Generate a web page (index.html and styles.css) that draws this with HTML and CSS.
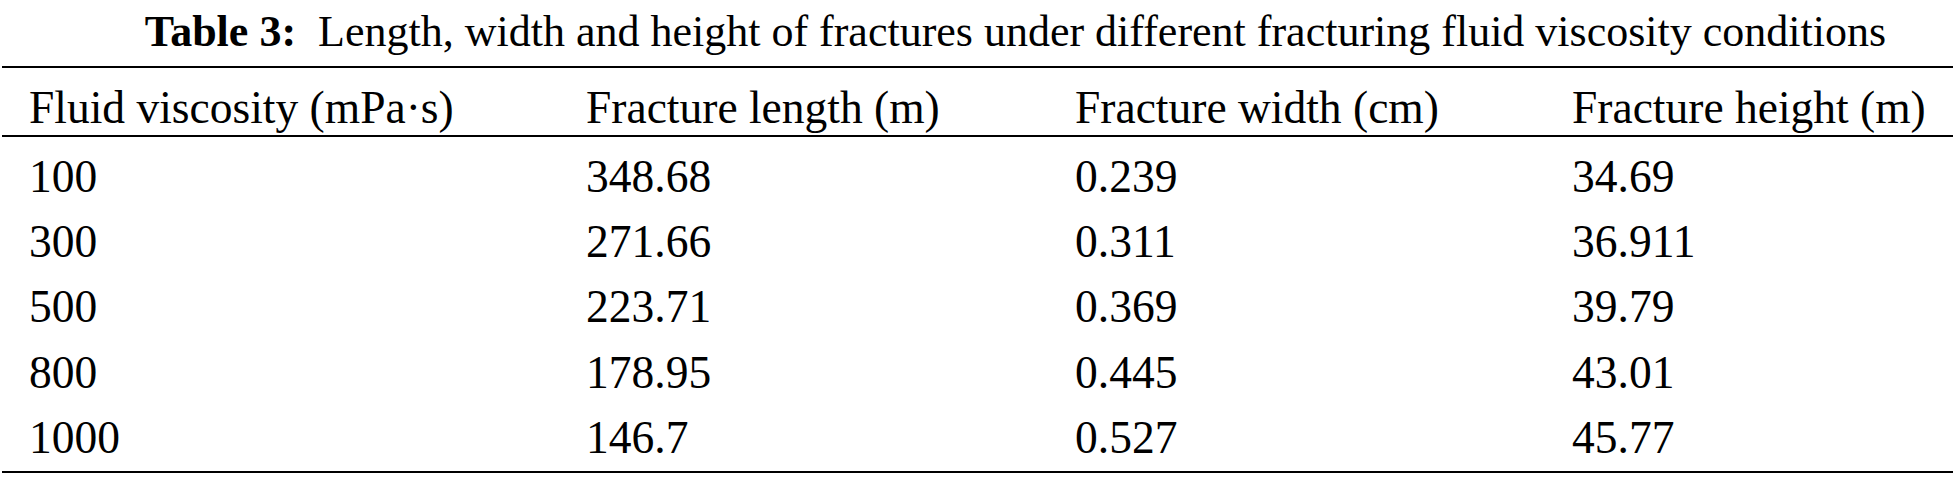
FILE: index.html
```html
<!DOCTYPE html>
<html lang="en">
<head>
<meta charset="utf-8">
<title>Table 3</title>
<link rel="stylesheet" href="styles.css">
</head>
<body>
<div class="page">
  <div class="caption"><span class="label">Table 3:</span>&nbsp; Length, width and height of fractures under different fracturing fluid viscosity conditions</div>
  <div class="table">
    <div class="row head">
      <div class="cell">Fluid viscosity (mPa·s)</div>
      <div class="cell">Fracture length (m)</div>
      <div class="cell">Fracture width (cm)</div>
      <div class="cell">Fracture height (m)</div>
    </div>
    <div class="row">
      <div class="cell">100</div><div class="cell">348.68</div><div class="cell">0.239</div><div class="cell">34.69</div>
    </div>
    <div class="row">
      <div class="cell">300</div><div class="cell">271.66</div><div class="cell">0.311</div><div class="cell">36.911</div>
    </div>
    <div class="row">
      <div class="cell">500</div><div class="cell">223.71</div><div class="cell">0.369</div><div class="cell">39.79</div>
    </div>
    <div class="row">
      <div class="cell">800</div><div class="cell">178.95</div><div class="cell">0.445</div><div class="cell">43.01</div>
    </div>
    <div class="row">
      <div class="cell">1000</div><div class="cell">146.7</div><div class="cell">0.527</div><div class="cell">45.77</div>
    </div>
  </div>
</div>
</body>
</html>
```
FILE: styles.css
```css
html, body {
  margin: 0;
  padding: 0;
  background: #fff;
}
body {
  font-family: "Liberation Serif", "Times New Roman", serif;
  color: #000;
  width: 1956px;
  height: 479px;
  overflow: hidden;
}
.page {
  padding: 0 3px 0 2px;
}
.caption {
  height: 66px;
  line-height: 64px;
  font-size: 44px;
  text-align: center;
  padding-left: 76px;
  box-sizing: border-box;
  white-space: nowrap;
}
.label {
  font-weight: bold;
}
.table {
  border-top: 2px solid #000;
  border-bottom: 2px solid #000;
  padding-bottom: 8px;
}
.row {
  display: grid;
  grid-template-columns: 557px 489px 497px 1fr;
  height: 65.2px;
  box-sizing: border-box;
  padding-top: 14px;
  line-height: 51.2px;
  font-size: 45.5px;
}
.row.head {
  border-bottom: 2px solid #000;
  height: 69px;
  padding-top: 12px;
  line-height: 55px;
}
.cell {
  padding-left: 27px;
  white-space: nowrap;
}
```
